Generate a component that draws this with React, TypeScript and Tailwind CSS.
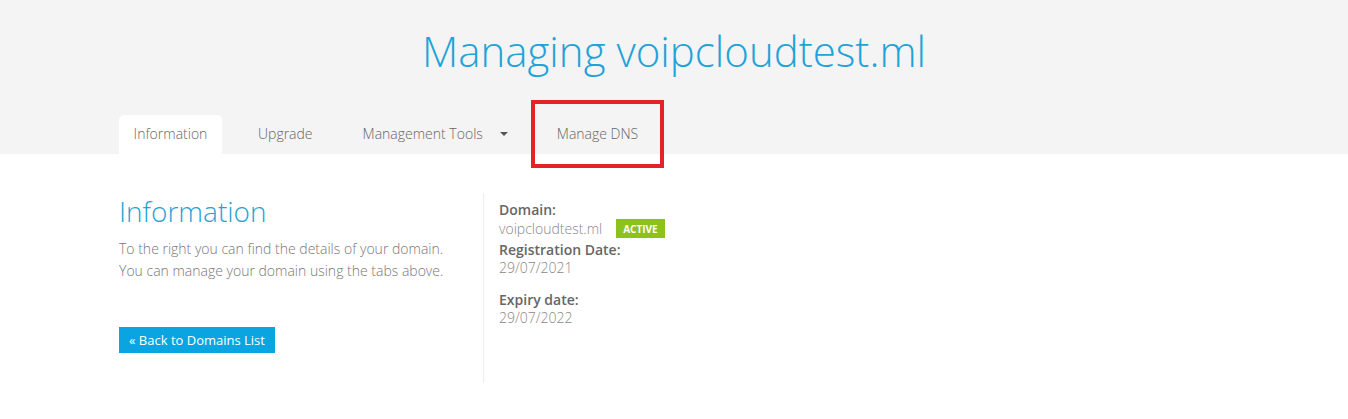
import React from "react";

export default function App() {
  const font = { fontFamily: '"Open Sans", "Liberation Sans", sans-serif' };
  return (
    <div className="w-[1348px] min-h-[419px] bg-white" style={font}>
      <div className="bg-[#f4f4f4]">
        <div className="w-[1140px] mx-auto px-[15px]">
          <h1 className="text-center text-[42px] font-light text-[#1fa3d8] leading-none pt-[30px] pb-[43px]">
            Managing voipcloudtest.ml
          </h1>
          <div className="flex items-end h-[39px] text-[14px] font-light text-[#666]">
            <div className="bg-white rounded-t-[5px] h-[39px] w-[103px] flex items-center justify-center pb-[2px]">
              Information
            </div>
            <div className="h-[39px] flex items-center ml-[36px] pb-[2px]">Upgrade</div>
            <div className="h-[39px] flex items-center ml-[50px] pb-[2px]">
              Management Tools
              <span className="ml-[17px] w-0 h-0 border-l-[4px] border-r-[4px] border-t-[4px] border-l-transparent border-r-transparent border-t-[#555] mt-[1px]" />
            </div>
            <div className="relative h-[39px] flex items-center ml-[49px] pb-[2px]">
              <div className="absolute left-[-26px] top-[-15px] w-[133px] h-[68px] border-[4px] border-[#e3232b]" />
              Manage DNS
            </div>
          </div>
        </div>
      </div>
      <div className="w-[1140px] mx-auto px-[15px] flex pt-[39px]">
        <div className="w-[365px] border-r border-[#eee] h-[190px]">
          <h2 className="text-[28px] font-light text-[#1fa3d8] leading-none mt-[4px]">Information</h2>
          <p className="text-[14px] font-light text-[#777] leading-[22px] mt-[13px]">
            To the right you can find the details of your domain.
            <br />
            You can manage your domain using the tabs above.
          </p>
          <button className="mt-[45px] bg-[#0aa5e0] text-white text-[13px] h-[26px] px-[10px] leading-[26px]">
            « Back to Domains List
          </button>
        </div>
        <div className="pl-[15px] pt-[8px] text-[14px] leading-[18px]">
          <div className="font-semibold text-[#666]">Domain:</div>
          <div className="flex items-center text-[#888] font-light">
            voipcloudtest.ml
            <span className="ml-[14px] bg-[#8cc21b] text-white text-[10px] font-bold h-[19px] px-[7px] flex items-center">
              ACTIVE
            </span>
          </div>
          <div className="font-semibold text-[#666] mt-[3px]">Registration Date:</div>
          <div className="text-[#888] font-light">29/07/2021</div>
          <div className="font-semibold text-[#666] mt-[14px]">Expiry date:</div>
          <div className="text-[#888] font-light">29/07/2022</div>
        </div>
      </div>
    </div>
  );
}
